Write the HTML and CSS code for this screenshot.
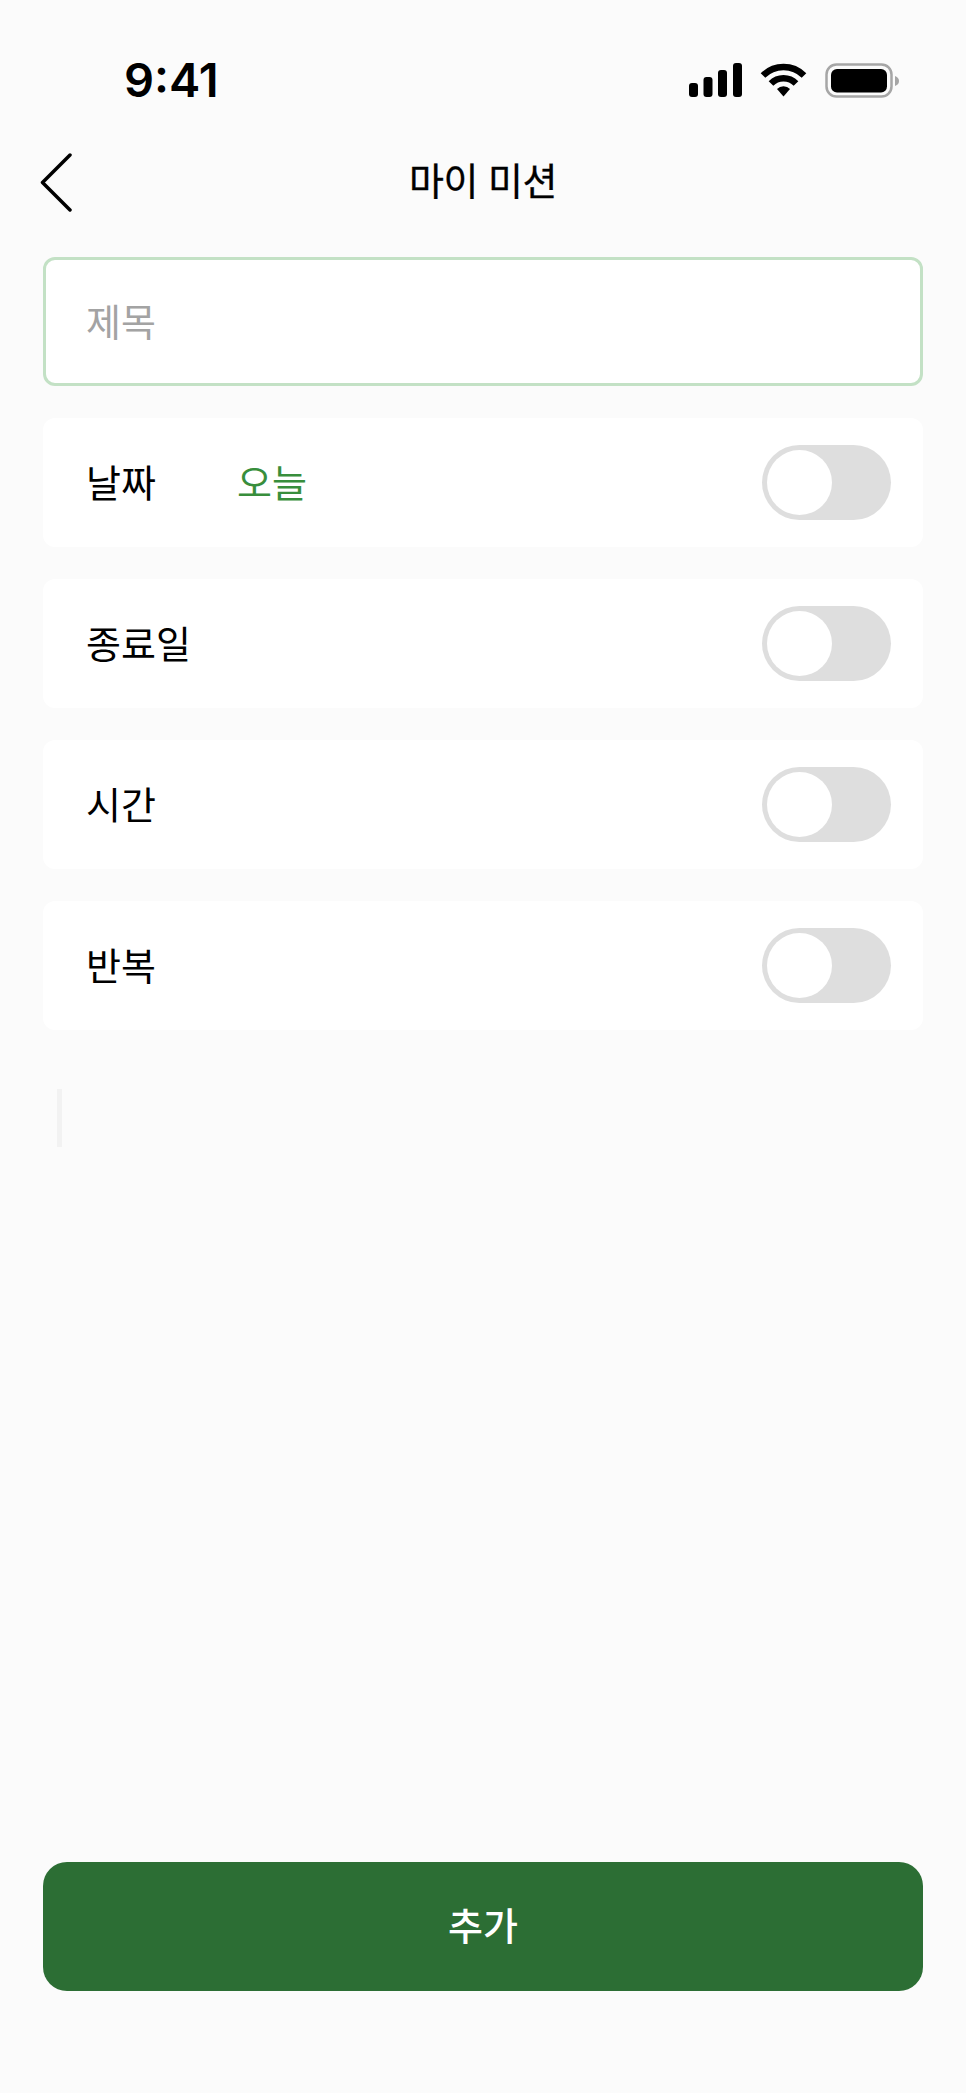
FILE: index.html
```html
<!DOCTYPE html>
<html lang="ko">
<head>
<meta charset="utf-8">
<title>마이 미션</title>
<link rel="stylesheet" href="styles.css">
</head>
<body>
<div class="screen">
  <div class="status">
    <span class="clock">9:41</span>
    <div class="status-icons">
      <svg class="signal" width="53" height="34" viewBox="0 0 53 34"><rect x="0" y="20" width="9" height="14" rx="3"/><rect x="14.500" y="14" width="9" height="20" rx="3"/><rect x="29" y="7" width="9" height="27" rx="3"/><rect x="44" y="0" width="9" height="34" rx="3"/></svg>
      <svg class="wifi" width="47" height="34" viewBox="0 0 47 34"><path d="M3 12.500 A29 29 0 0 1 44 12.500" fill="none" stroke="#000" stroke-width="6.500"/><path d="M11 20.500 A17.500 17.500 0 0 1 36 20.500" fill="none" stroke="#000" stroke-width="6.500"/><path d="M17 26 A9 9 0 0 1 30 26 L23.500 33.500 Z"/></svg>
      <svg class="battery" width="74" height="36" viewBox="0 0 74 36"><rect x="1.500" y="1.500" width="65" height="32" rx="10" fill="none" stroke="#a6a6a6" stroke-width="2.500"/><rect x="6" y="6" width="56" height="23.500" rx="6"/><path d="M70 13 C73 14 74 16 74 18 C74 20 73 22 70 23 Z" fill="#a6a6a6"/></svg>
    </div>
  </div>
  <header class="nav">
    <svg class="back" width="34" height="62" viewBox="0 0 34 62"><path d="M30 2 L2.500 29.500 L30 57" fill="none" stroke="#000" stroke-width="3.500" stroke-linecap="round" stroke-linejoin="round"/></svg>
    <h1 class="title">마이 미션</h1>
  </header>
  <main class="form">
    <div class="card input"><span class="placeholder">제목</span></div>
    <div class="card row">
      <div class="row-left"><span class="label">날짜</span><span class="value">오늘</span></div>
      <span class="toggle"><span class="thumb"></span></span>
    </div>
    <div class="card row">
      <span class="label">종료일</span>
      <span class="toggle"><span class="thumb"></span></span>
    </div>
    <div class="card row">
      <span class="label">시간</span>
      <span class="toggle"><span class="thumb"></span></span>
    </div>
    <div class="card row">
      <span class="label">반복</span>
      <span class="toggle"><span class="thumb"></span></span>
    </div>
    <div class="caret"></div>
  </main>
  <button class="submit">추가</button>
</div>
</body>
</html>
```

FILE: styles.css
```css
* { box-sizing: border-box; }
html, body { margin: 0; padding: 0; }
body {
  background: #fbfbfb;
  font-family: "Noto Sans CJK KR", "Inter", "Liberation Sans", sans-serif;
  color: #000;
}
.screen {
  width: 966px;
  height: 2093px;
  display: flex;
  flex-direction: column;
  padding: 0 43px;
}
.status {
  height: 98px;
  padding: 60px 24px 0 81px;
  display: flex;
  justify-content: space-between;
  align-items: flex-start;
}
.clock {
  font-family: "Inter", "Liberation Sans", sans-serif;
  font-size: 47px;
  font-weight: 600;
  line-height: 40px;
}
.status-icons {
  display: flex;
  align-items: flex-start;
  gap: 18px;
  padding-top: 3px;
}
.nav {
  height: 159px;
  padding-top: 3px;
  display: flex;
  align-items: center;
  justify-content: center;
  position: relative;
}
.back {
  position: absolute;
  left: -3px;
  top: 55px;
}
.title {
  margin: 0;
  font-size: 38px;
  font-weight: 400;
  line-height: 1.2;
  letter-spacing: -0.5px;
  -webkit-text-stroke: 0.3px #000;
}
.form {
  flex: 1;
  display: flex;
  flex-direction: column;
  gap: 32px;
}
.card {
  height: 129px;
  background: #fff;
  border-radius: 12px;
  padding: 0 32px 0 43px;
  display: flex;
  align-items: center;
  flex-shrink: 0;
}
.input {
  border: 3px solid #c3e1c5;
  padding-left: 40px;
}
.placeholder, .label, .value {
  font-size: 38px;
  line-height: 1.2;
  margin-bottom: 4px;
}
.placeholder { color: #a3a3a3; }
.row { justify-content: space-between; }
.row-left { display: flex; gap: 81px; }
.value { color: #388e3c; }
.toggle {
  width: 129px;
  height: 75px;
  border-radius: 38px;
  background: #dedede;
  padding: 5px;
  display: block;
}
.thumb {
  display: block;
  width: 65px;
  height: 65px;
  border-radius: 50%;
  background: #fff;
}
.caret {
  width: 5px;
  height: 58px;
  margin: 27px 0 0 14px;
  background: #f2f2f2;
  flex-shrink: 0;
}
.submit {
  height: 129px;
  margin-bottom: 102px;
  padding: 0 0 7px;
  border: 0;
  border-radius: 24px;
  background: #2c6e34;
  color: #fff;
  font-family: inherit;
  font-size: 38px;
  font-weight: 500;
  flex-shrink: 0;
}
```
